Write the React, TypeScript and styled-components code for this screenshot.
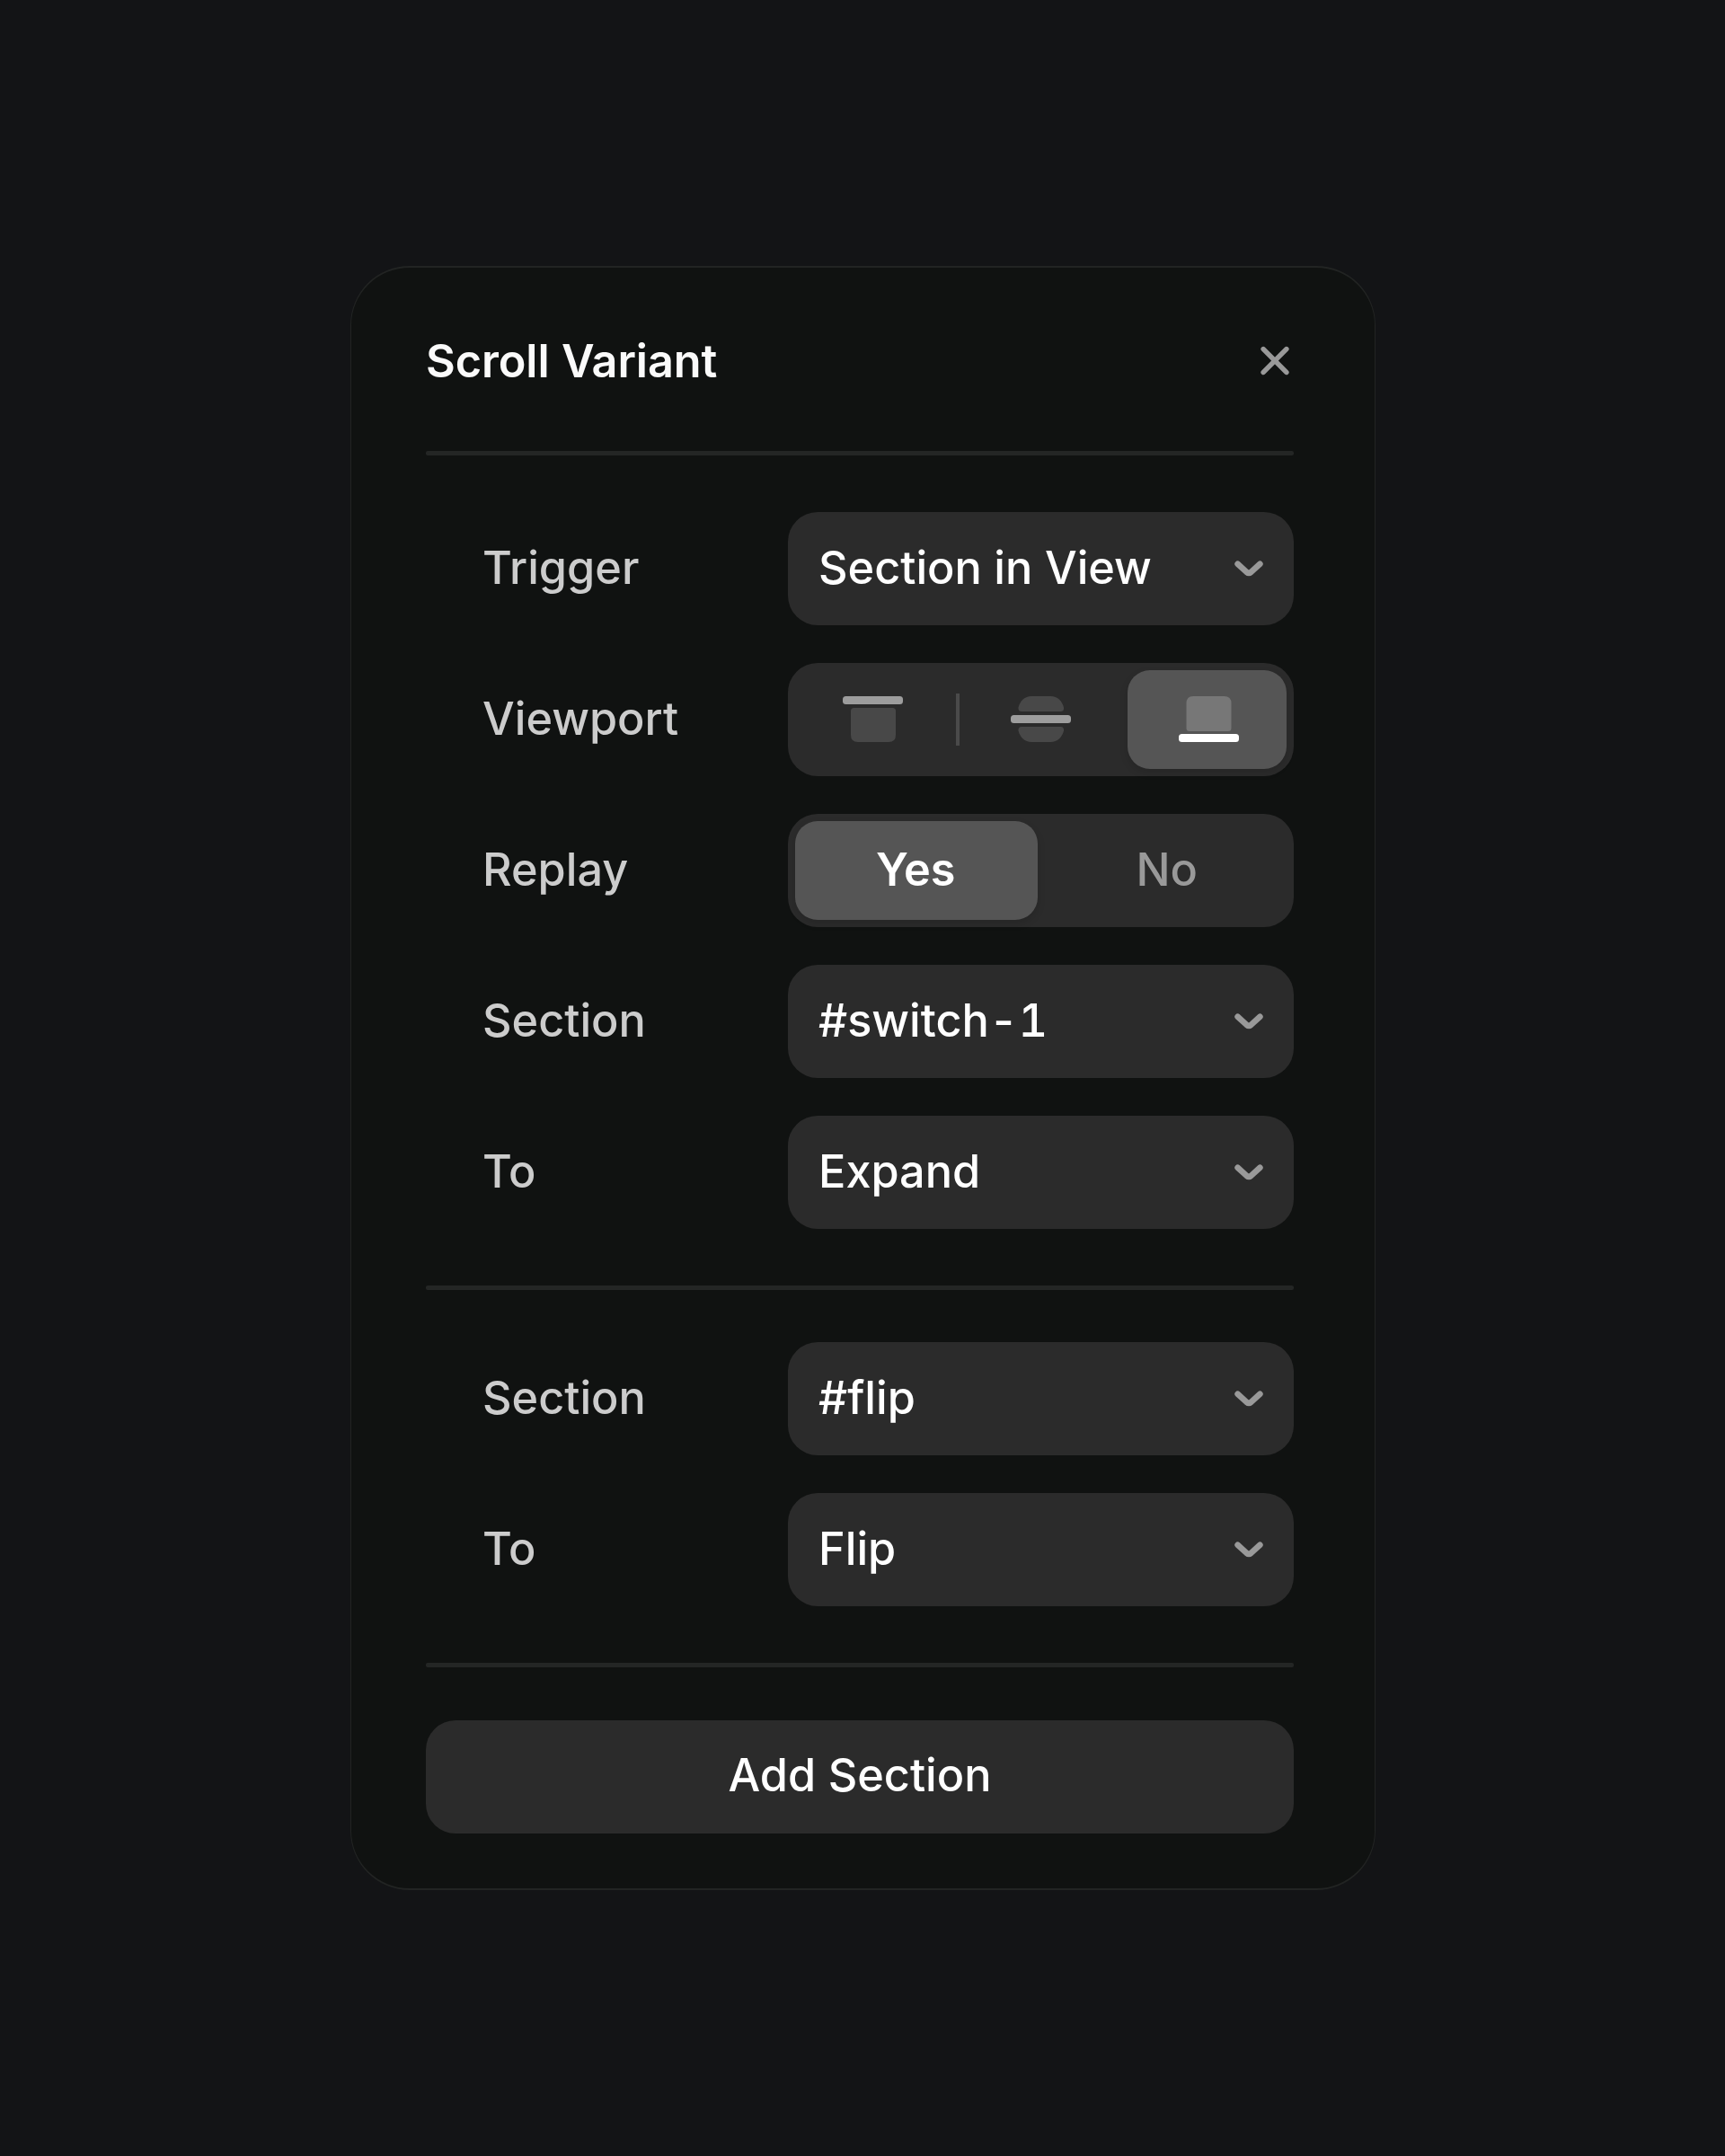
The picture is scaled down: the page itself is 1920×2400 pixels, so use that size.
import React, { useState } from "react";
import styled, { createGlobalStyle, css } from "styled-components";

const GlobalStyle = createGlobalStyle`
  *, *::before, *::after { box-sizing: border-box; }
  body { margin: 0; background: #131416; }
  button { font: inherit; letter-spacing: inherit; color: inherit; border: 0; padding: 0; background: none; cursor: pointer; }
  svg { display: block; flex: none; }
`;

const Stage = styled.main`
  width: 1920px;
  height: 2400px;
  padding-left: 390px;
  padding-top: 296px;
  background: #131416;
  font-family: Inter, "Liberation Sans", sans-serif;
  font-size: 50.4px;
  font-weight: 500;
  font-optical-sizing: none;
  font-feature-settings: "tnum";
  line-height: 63px;
  letter-spacing: 0;
`;

const Panel = styled.section`
  width: 1141px;
  height: 1808px;
  padding: 0 90px 0 83px;
  border: solid #222423;
  border-width: 2px 1px;
  border-radius: 66px;
  background: #101211;
`;

const Header = styled.header`
  display: flex;
  align-items: center;
  justify-content: space-between;
  height: 204px;
  padding: 2px 5px 0 0;
`;

const Title = styled.h1`
  margin: 0;
  font-size: inherit;
  font-weight: 600;
  letter-spacing: -0.1px;
  color: #fafafa;
`;

const Divider = styled.hr`
  height: 5px;
  margin: 0;
  border: 0;
  border-radius: 2px;
  background: #242625;
`;

const Fields = styled.div<{ $top: number }>`
  display: grid;
  gap: 42px;
  padding: ${(p) => p.$top}px 0 63px 63px;
`;

const Row = styled.div`
  display: grid;
  grid-template-columns: 340px 563px;
  align-items: center;
  height: 126px;
`;

const Label = styled.span`
  padding-bottom: 3px;
  color: #cccccc;
`;

const box = css`
  height: 126px;
  border-radius: 33px;
  background: #2b2b2b;
`;

const Select = styled.button`
  ${box}
  display: flex;
  align-items: center;
  justify-content: space-between;
  padding: 0 34px;
  color: #fff;
  text-align: left;
`;

const Value = styled.span`
  padding-bottom: 3px;
`;

const Segments = styled.div<{ $columns: number }>`
  ${box}
  display: grid;
  grid-template-columns: repeat(${(p) => p.$columns}, 1fr);
  gap: 8px;
  padding: 8px;
`;

const Segment = styled.button<{ $active: boolean; $separated?: boolean }>`
  position: relative;
  display: flex;
  align-items: center;
  justify-content: center;
  padding-bottom: 1px;
  border-radius: 25px;
  color: ${(p) => (p.$active ? "#fff" : "#999")};
  font-weight: ${(p) => (p.$active ? 600 : 500)};
  ${(p) =>
    p.$active &&
    css`
      background: #555;
      box-shadow: 0 4px 10px rgba(0, 0, 0, 0.12);
    `}
  ${(p) =>
    p.$separated &&
    css`
      &::after {
        content: "";
        position: absolute;
        top: 26px;
        right: -6px;
        width: 4px;
        height: 58px;
        background: #4a4a4a;
      }
    `}
`;

const Choice = styled.span<{ $shift: number }>`
  padding-bottom: 2px;
  padding-left: ${(p) => Math.max(p.$shift, 0)}px;
  padding-right: ${(p) => Math.max(-p.$shift, 0)}px;
`;

const Footer = styled.footer`
  padding-top: 59px;
`;

const AddButton = styled.button`
  ${box}
  display: block;
  width: 100%;
  padding-bottom: 5px;
  color: #fff;
`;

const CloseIcon = () => (
  <svg width="32" height="33" viewBox="0 0 32 33" fill="none" stroke="#999" strokeWidth="5.6" strokeLinecap="round">
    <path d="M3.2 3.6 28.8 29.4M28.8 3.6 3.2 29.4" />
  </svg>
);

const Chevron = () => (
  <svg width="32" height="20" viewBox="0 0 32 20" fill="none" stroke="#999" strokeWidth="6.6" strokeLinecap="round" strokeLinejoin="round">
    <path d="M3.600 4.700 13.600 13.900Q16 15.900 18.400 13.900L28.400 4.700" />
  </svg>
);

type Anchor = "top" | "middle" | "bottom";

const ViewportIcon = ({ anchor, active }: { anchor: Anchor; active: boolean }) => {
  const bar = active ? "#fff" : "#9d9d9d";
  const body = active ? "#777" : "#484848";
  return (
    <svg width="71" height="51" viewBox="0 0 71 51">
      {anchor === "top" && (
        <>
          <rect x="0" y="0" width="67" height="9" rx="3.5" fill={bar} />
          <path d="M12.500 13H55.500Q59 13 59 16.500V43Q59 51 51 51H17Q9 51 9 43V16.500Q9 13 12.500 13Z" fill={body} />
        </>
      )}
      {anchor === "middle" && (
        <>
          <path d="M25 0H46.500C54 0 59 5 61 12.500Q61.500 17 57.500 17H14Q10 17 10.500 12.500C12.500 5 17.500 0 25 0Z" fill={body} />
          <rect x="2" y="21" width="67" height="9" rx="3.5" fill={bar} />
          <path d="M14 34H57.500Q61.500 34 61 38.500C59 46 54 51 46.500 51H25C17.500 51 12.500 46 10.500 38.500Q10 34 14 34Z" fill={body} />
        </>
      )}
      {anchor === "bottom" && (
        <>
          <path d="M20 0H54.500Q62.500 0 62.500 8V35.500Q62.500 39 59 39H16Q12.500 39 12.500 35.500V8Q12.500 0 20 0Z" fill={body} />
          <rect x="4" y="42" width="67" height="9" rx="3.5" fill={bar} />
        </>
      )}
    </svg>
  );
};

const SelectField = ({ label, value }: { label: string; value: string }) => (
  <Row>
    <Label>{label}</Label>
    <Select type="button" aria-haspopup="listbox">
      <Value>{value}</Value>
      <Chevron />
    </Select>
  </Row>
);

const anchors: Anchor[] = ["top", "middle", "bottom"];

export default function App() {
  const [anchor, setAnchor] = useState<Anchor>("bottom");
  const [replay, setReplay] = useState(true);

  return (
    <>
      <GlobalStyle />
      <Stage>
        <Panel>
          <Header>
            <Title>Scroll Variant</Title>
            <button type="button" aria-label="Close">
              <CloseIcon />
            </button>
          </Header>
          <Divider />
          <Fields $top={63}>
            <SelectField label="Trigger" value="Section in View" />
            <Row>
              <Label>Viewport</Label>
              <Segments $columns={3}>
                {anchors.map((a, i) => (
                  <Segment
                    key={a}
                    type="button"
                    aria-label={a}
                    $active={anchor === a}
                    $separated={i < 2 && anchor !== a && anchor !== anchors[i + 1]}
                    onClick={() => setAnchor(a)}
                  >
                    <ViewportIcon anchor={a} active={anchor === a} />
                  </Segment>
                ))}
              </Segments>
            </Row>
            <Row>
              <Label>Replay</Label>
              <Segments $columns={2}>
                <Segment type="button" $active={replay} onClick={() => setReplay(true)}>
                  <Choice $shift={-1}>Yes</Choice>
                </Segment>
                <Segment type="button" $active={!replay} onClick={() => setReplay(false)}>
                  <Choice $shift={3}>No</Choice>
                </Segment>
              </Segments>
            </Row>
            <SelectField label="Section" value="#switch-1" />
            <SelectField label="To" value="Expand" />
          </Fields>
          <Divider />
          <Fields $top={58}>
            <SelectField label="Section" value="#flip" />
            <SelectField label="To" value="Flip" />
          </Fields>
          <Divider />
          <Footer>
            <AddButton type="button">Add Section</AddButton>
          </Footer>
        </Panel>
      </Stage>
    </>
  );
}
